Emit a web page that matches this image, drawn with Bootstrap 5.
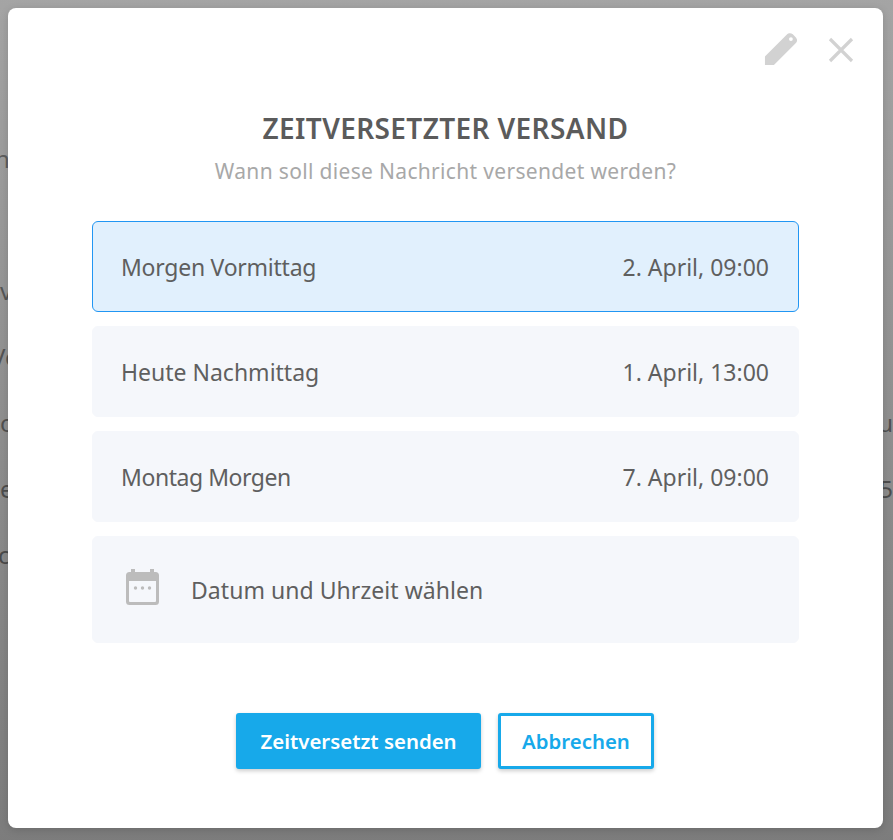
<!DOCTYPE html>
<html lang="de"><head><meta charset="utf-8"><title>Zeitversetzter Versand</title>
<link href="https://cdn.jsdelivr.net/npm/bootstrap@5.3.0/dist/css/bootstrap.min.css" rel="stylesheet">
<style>
html,body{height:840px;overflow:hidden}
body{font-family:"Noto Sans","Open Sans",sans-serif;color:#5f5f5f;background:#fff;position:relative}
.bgpage{height:840px;overflow:hidden;font-size:24px;color:#222;white-space:nowrap;line-height:30px;padding-top:144px}
.bgrow{display:flex;justify-content:space-between;height:66px}
.bgrow.r1{height:132px}
.cut-n{margin-left:-5px}
.cut-v{margin-left:-9px}
.cut-c{margin-left:-2px}
.bgveil{position:absolute;inset:0;background:linear-gradient(180deg,rgba(128,128,128,.715) 0,rgba(98,98,98,.715) 50%,rgba(72,72,72,.715) 100%)}
.sheet{position:absolute;left:8px;top:8px;width:875px;height:820px;background:#fff;border-radius:8px;box-shadow:0 2px 8px rgba(0,0,0,.15);padding:0 84px}
.tools{height:84px;margin-right:-84px;padding:24px 29px 0 0;gap:30px}
.tool-x{margin-top:5px}
.ttl{font-size:28px;font-weight:600;color:#5b5b5b;line-height:38px;margin:17px 0 0;letter-spacing:.38px}
.sub{font-size:21px;color:#a8a8a8;line-height:30px;margin:9px 0 35px;letter-spacing:.33px}
.opt{height:91px;border-radius:6px;background:#f5f7fb;padding:2px 29px 0 28px;margin-bottom:14px;font-size:23px;border:1px solid #f5f7fb}
.opt.sel{background:#e1f0fd;border-color:#2196f3}
.opt.cal{height:107px;padding-left:33px;gap:32px}
.cal-ic{margin-bottom:7px}
.cal-txt{letter-spacing:.05px}
.tight-a{letter-spacing:-.25px}
.tight-b{letter-spacing:-.45px}
.acts{gap:17px;margin-top:70px;padding-right:1px}
.act{height:56px;font-size:20.4px;font-weight:600;border-radius:3px;box-shadow:0 2px 4px rgba(0,0,0,.2);border:3px solid #17a9ea;padding:0 21px;display:flex;align-items:center}
.act.solid{background:#17a9ea;color:#fff;min-width:245px;justify-content:center}
.act.ghost{background:#fff;color:#17a9ea}
</style></head><body>
<div class="bgpage" aria-hidden="true">
<div class="bgrow r1"><span class="cut-n">n</span></div>
<div class="bgrow"><span>v</span></div>
<div class="bgrow"><span class="cut-v">Ve</span></div>
<div class="bgrow"><span>o</span><span>u</span></div>
<div class="bgrow"><span>e</span><span>5</span></div>
<div class="bgrow"><span class="cut-c">cl</span></div>
</div>
<div class="bgveil"></div>
<div class="sheet">
 <div class="tools d-flex justify-content-end align-items-start">
  <svg width="34" height="34" viewBox="0 0 36 36"><path fill="#d2d2d2" d="M1 35V26L24 3C26 1 28.500 1 30.500 2.500L34 6C35.500 8 35.500 10 33.500 12L10.500 35Z"/><circle cx="28.500" cy="7.500" r="2" fill="#fff"/></svg>
  <svg width="26" height="26" viewBox="0 0 26 26" class="tool-x"><path stroke="#d2d2d2" stroke-width="3.200" d="M2 2L24 24M24 2L2 24"/></svg>
 </div>
 <div class="text-center">
  <h1 class="ttl">ZEITVERSETZTER VERSAND</h1>
  <p class="sub">Wann soll diese Nachricht versendet werden?</p>
 </div>
 <div class="opt sel d-flex justify-content-between align-items-center"><span class="tight-a">Morgen Vormittag</span><span>2. April, 09:00</span></div>
 <div class="opt d-flex justify-content-between align-items-center"><span>Heute Nachmittag</span><span>1. April, 13:00</span></div>
 <div class="opt d-flex justify-content-between align-items-center"><span class="tight-b">Montag Morgen</span><span>7. April, 09:00</span></div>
 <div class="opt cal d-flex align-items-center">
  <svg class="cal-ic" width="33" height="36" viewBox="0 0 33 36"><path fill="#bcbcbc" fill-rule="evenodd" d="M5 0h4v3h15V0h4v3h1.500A3.500 3.500 0 0 1 33 6.500v26a3.500 3.500 0 0 1-3.500 3.500h-26A3.500 3.500 0 0 1 0 32.500v-26A3.500 3.500 0 0 1 3.500 3H5zM3 12v20a1 1 0 0 0 1 1h25a1 1 0 0 0 1-1V12z"/><g fill="#bcbcbc"><circle cx="9.500" cy="19" r="1.700"/><circle cx="16.500" cy="19" r="1.700"/><circle cx="23.500" cy="19" r="1.700"/></g></svg>
  <span class="cal-txt">Datum und Uhrzeit wählen</span>
 </div>
 <div class="acts d-flex justify-content-center">
  <button type="button" class="btn act solid">Zeitversetzt senden</button>
  <button type="button" class="btn act ghost">Abbrechen</button>
 </div>
</div>
<script src="https://cdn.jsdelivr.net/npm/bootstrap@5.3.0/dist/js/bootstrap.bundle.min.js"></script>
</body></html>
